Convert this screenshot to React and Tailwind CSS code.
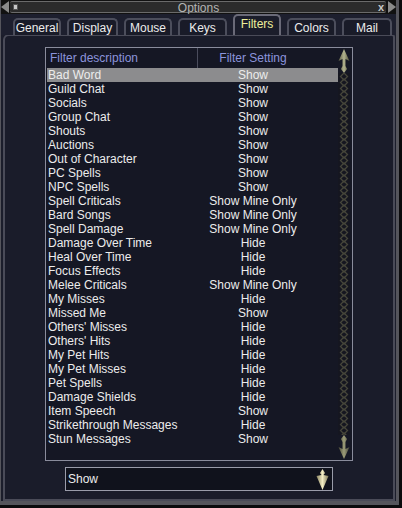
const filters = [
  ["Bad Word", "Show"],
  ["Guild Chat", "Show"],
  ["Socials", "Show"],
  ["Group Chat", "Show"],
  ["Shouts", "Show"],
  ["Auctions", "Show"],
  ["Out of Character", "Show"],
  ["PC Spells", "Show"],
  ["NPC Spells", "Show"],
  ["Spell Criticals", "Show Mine Only"],
  ["Bard Songs", "Show Mine Only"],
  ["Spell Damage", "Show Mine Only"],
  ["Damage Over Time", "Hide"],
  ["Heal Over Time", "Hide"],
  ["Focus Effects", "Hide"],
  ["Melee Criticals", "Show Mine Only"],
  ["My Misses", "Hide"],
  ["Missed Me", "Show"],
  ["Others' Misses", "Hide"],
  ["Others' Hits", "Hide"],
  ["My Pet Hits", "Hide"],
  ["My Pet Misses", "Hide"],
  ["Pet Spells", "Hide"],
  ["Damage Shields", "Hide"],
  ["Item Speech", "Show"],
  ["Strikethrough Messages", "Hide"],
  ["Stun Messages", "Show"],
];

const tabs = [
  { name: "General", w: "w-[48px]" },
  { name: "Display", w: "w-[51px]" },
  { name: "Mouse", w: "w-[48px]" },
  { name: "Keys", w: "w-[49px]" },
  { name: "Filters", w: "w-[48px]", active: true },
  { name: "Colors", w: "w-[49px]" },
  { name: "Mail", w: "w-[50px]" },
];

// chain links for the scroll track
const ChainTrack = ({ height }) => {
  const links = [];
  for (let y = 0; y < height; y += 6) {
    links.push(
      <path
        key={y}
        d={`M6 ${y} L9.5 ${y + 3.5} L6 ${y + 7} L2.5 ${y + 3.5} Z`}
        fill="none"
        stroke="#46463a"
        strokeWidth="1.3"
      />
    );
  }
  return (
    <svg width="12" height={height} className="block">
      <rect x="0" y="0" width="12" height={height} fill="#151620" />
      {links}
    </svg>
  );
};

const UpArrow = () => (
  <svg width="12" height="24" className="block">
    <defs>
      <linearGradient id="ua" x1="0" y1="0" x2="1" y2="0">
        <stop offset="0" stopColor="#5b5b44" />
        <stop offset="0.5" stopColor="#b4b48e" />
        <stop offset="1" stopColor="#4c4c38" />
      </linearGradient>
    </defs>
    <path d="M6 0 L11.5 12 L7.5 10 L7.5 17 L9 20 L6 24 L3 20 L4.5 17 L4.5 10 L0.5 12 Z" fill="url(#ua)" />
  </svg>
);

const DownArrow = () => (
  <svg width="12" height="24" className="block">
    <defs>
      <linearGradient id="da" x1="0" y1="0" x2="1" y2="0">
        <stop offset="0" stopColor="#4c4c38" />
        <stop offset="0.5" stopColor="#9c9c78" />
        <stop offset="1" stopColor="#44443a" />
      </linearGradient>
    </defs>
    <path d="M6 24 L11.5 12 L7.5 14 L7.5 7 L9 4 L6 0 L3 4 L4.5 7 L4.5 14 L0.5 12 Z" fill="url(#da)" />
  </svg>
);

const ComboArrow = () => (
  <svg width="13" height="21" className="block">
    <defs>
      <linearGradient id="ca" x1="0" y1="0" x2="1" y2="0">
        <stop offset="0" stopColor="#8a8460" />
        <stop offset="0.5" stopColor="#f2ecc4" />
        <stop offset="1" stopColor="#7c7656" />
      </linearGradient>
    </defs>
    <path d="M6.5 0 L9 4 L7.5 6 L12.5 7 L6.5 21 L0.5 7 L5.5 6 L4 4 Z" fill="url(#ca)" />
  </svg>
);

const App = () => {
  return (
    <div
      className="w-[402px] h-[508px] bg-[#0b0b0d] text-[12px] leading-[14px]"
      style={{ fontFamily: '"Liberation Sans", Arial, sans-serif' }}
    >
      <div className="w-[399px] h-[505px] flex flex-col bg-[#1b1d2b] border-l border-r-[3px] border-b-[4px] border-[#55555c]">
        {/* title bar */}
        <div className="relative h-[14px] flex items-center bg-[#111]">
          <div className="absolute left-0 top-[1px] w-0 h-0 border-y-[6px] border-y-transparent border-r-[8px] border-r-[#8a8a8a]" />
          <div className="absolute left-[9px] top-[1px] right-[10px] h-[12px] bg-[#2b2b2b] border-t border-b border-[#6a6a6a] rounded-[2px]" />
          <div className="absolute left-[12px] top-[4px] w-[5px] h-[6px] bg-[#c8c8c8] border border-[#555]" />
          <div className="relative flex-1 text-center text-[#b4b4b4] pt-[1px]">Options</div>
          <div className="absolute right-[12px] top-0 text-[#c8c8c8] text-[11px] font-bold">x</div>
          <div className="absolute right-0 top-[1px] w-0 h-0 border-y-[6px] border-y-transparent border-l-[8px] border-l-[#8a8a8a]" />
        </div>

        {/* tabs */}
        <div className="h-[21px] flex items-end gap-[6px] pl-[12px] bg-[#1d1f2e] relative z-10 -mb-[1px]">
          {tabs.map((t) =>
            t.active ? (
              <div
                key={t.name}
                className={`${t.w} h-[21px] flex items-center justify-center rounded-t-[5px] border-2 border-b-0 border-[#6a6a78] bg-[#1b1d2b] text-[#eef09a] pb-[3px]`}
              >
                {t.name}
              </div>
            ) : (
              <div
                key={t.name}
                className={`${t.w} h-[17px] flex items-end justify-center rounded-t-[5px] border-2 border-b-0 border-[#4c4e5c] bg-[#191b28] text-[#ececec]`}
              >
                {t.name}
              </div>
            )
          )}
        </div>

        {/* panel */}
        <div className="ml-[2px] w-[392px] h-[467px] border-2 border-[#4a4b58] rounded-tl-[6px] rounded-tr-[3px] bg-[#1a1c2a] flex flex-col pl-[40px] pt-[11px]">
          <div className="w-[308px] h-[414px] border border-[#8a8c9c] bg-[#151724] flex">
            <div className="flex-1 flex flex-col pl-[1px]">
              <div className="h-[20px] flex items-center text-[#8c94dc]">
                <div className="w-[151px] pl-[3px] h-full flex items-center border-r border-[#4a4c5c]">
                  Filter description
                </div>
                <div className="w-[110px] text-center">Filter Setting</div>
              </div>
              {filters.map(([desc, setting], i) => (
                <div
                  key={desc}
                  className={`h-[14px] flex items-center text-[#ececec] ${i === 0 ? "bg-[#8c8c8e]" : ""}`}
                >
                  <div className="w-[151px] pl-[1px] whitespace-nowrap">{desc}</div>
                  <div className="w-[110px] text-center whitespace-nowrap">{setting}</div>
                </div>
              ))}
            </div>
            <div className="w-[12px] mr-[2px] pt-[1px] flex flex-col">
              <UpArrow />
              <ChainTrack height={362} />
              <DownArrow />
            </div>
          </div>

          {/* combo */}
          <div className="mt-[6px] ml-[20px] w-[268px] h-[24px] border border-[#9a9caa] bg-[#10121c] flex items-center justify-between pl-[2px] pr-[3px]">
            <span className="text-[#ececec]">Show</span>
            <ComboArrow />
          </div>
        </div>
      </div>
    </div>
  );
};

export default App;
